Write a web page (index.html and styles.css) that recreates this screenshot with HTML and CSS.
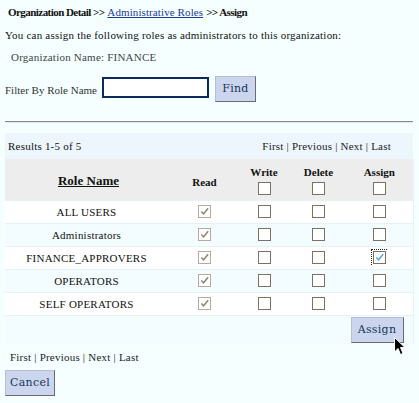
FILE: index.html
```html
<!DOCTYPE html>
<html>
<head>
<meta charset="utf-8">
<link rel="stylesheet" href="styles.css">
</head>
<body>
<div class="page">
  <div class="crumbs"><b>Organization Detail &gt;&gt;</b> <a href="#">Administrative Roles</a> <b>&gt;&gt; Assign</b></div>
  <p class="intro">You can assign the following roles as administrators to this organization:</p>
  <p class="orgname">Organization Name: FINANCE</p>
  <div class="filter">
    <span class="filter-label">Filter By Role Name</span>
    <span class="filter-input"></span>
    <span class="btn find">Find</span>
  </div>
  <div class="rule"></div>
  <div class="results">
    <div class="results-bar">
      <span>Results 1-5 of 5</span>
      <span class="pager">First | Previous | Next | Last</span>
    </div>
    <table class="grid">
      <colgroup><col class="c-name"><col class="c-read"><col class="c-write"><col class="c-del"><col class="c-assign"></colgroup>
      <thead>
        <tr>
          <th class="th-name"><u>Role Name</u></th>
          <th class="th-read">Read</th>
          <th><div class="th-label">Write</div><span class="cb"></span></th>
          <th><div class="th-label">Delete</div><span class="cb"></span></th>
          <th><div class="th-label">Assign</div><span class="cb"></span></th>
        </tr>
      </thead>
      <tbody>
        <tr class="odd"><td>ALL USERS</td><td><span class="cb ro"><svg viewBox="0 0 12 12"><path d="M2.5 6 L5 8.5 L10 2.5" /></svg></span></td><td><span class="cb"></span></td><td><span class="cb"></span></td><td><span class="cb"></span></td></tr>
        <tr class="even"><td>Administrators</td><td><span class="cb ro"><svg viewBox="0 0 12 12"><path d="M2.5 6 L5 8.5 L10 2.5" /></svg></span></td><td><span class="cb"></span></td><td><span class="cb"></span></td><td><span class="cb"></span></td></tr>
        <tr class="odd"><td>FINANCE_APPROVERS</td><td><span class="cb ro"><svg viewBox="0 0 12 12"><path d="M2.5 6 L5 8.5 L10 2.5" /></svg></span></td><td><span class="cb"></span></td><td><span class="cb"></span></td><td><span class="cb on focus"><svg viewBox="0 0 12 12"><path d="M2.5 6 L5 8.5 L10 2.5" /></svg></span></td></tr>
        <tr class="even"><td>OPERATORS</td><td><span class="cb ro"><svg viewBox="0 0 12 12"><path d="M2.5 6 L5 8.5 L10 2.5" /></svg></span></td><td><span class="cb"></span></td><td><span class="cb"></span></td><td><span class="cb"></span></td></tr>
        <tr class="odd"><td>SELF OPERATORS</td><td><span class="cb ro"><svg viewBox="0 0 12 12"><path d="M2.5 6 L5 8.5 L10 2.5" /></svg></span></td><td><span class="cb"></span></td><td><span class="cb"></span></td><td><span class="cb"></span></td></tr>
        <tr class="action"><td colspan="5"><span class="btn assign">Assign<svg class="cursor" viewBox="0 0 12 19"><path d="M0.5 0.5 L0.5 15 L4 11.5 L6.5 17.5 L9 16.5 L6.5 10.5 L11 10.5 Z" /></svg></span></td></tr>
      </tbody>
    </table>
  </div>
  <div class="pager bottom">First | Previous | Next | Last</div>
  <span class="btn cancel">Cancel</span>
</div>
</body>
</html>
```

FILE: styles.css
```css
html, body {
  margin: 0;
  padding: 0;
  background: #f5ffff;
}
body {
  font-family: "Liberation Serif", "Times New Roman", serif;
  font-size: 11px;
  color: #111;
  letter-spacing: 0.22px;
}
.page {
  padding: 5px 6px 0 5px;
}
.crumbs {
  padding-left: 3px;
  height: 14px;
  line-height: 14px;
  font-size: 11px;
}
.crumbs b {
  letter-spacing: -0.55px;
}
.crumbs a {
  color: #1a3a9a;
  font-weight: normal;
  letter-spacing: 0.1px;
}
.intro {
  margin: 9px 0 0 0;
  line-height: 14px;
}
.orgname {
  margin: 8px 0 0 6px;
  line-height: 14px;
  color: #444;
}
.filter {
  display: flex;
  align-items: center;
  margin-top: 12px;
  height: 26px;
}
.filter-label {
  color: #333;
  margin-right: 5px;
  margin-top: 1px;
  letter-spacing: 0;
}
.filter-input {
  width: 103px;
  height: 17px;
  border: 2px solid #0a2a5a;
  background: #fff;
  margin-top: -3px;
}
.btn {
  display: inline-flex;
  align-items: center;
  justify-content: center;
  box-sizing: border-box;
  background: #ccd5ee;
  border: 1px solid;
  border-color: #b8bed0 #6a6a72 #6a6a72 #b8bed0;
  font-family: "DejaVu Serif", serif;
  font-size: 11px;
  letter-spacing: 0.3px;
  color: #14375a;
  height: 26px;
  position: relative;
}
.find {
  width: 41px;
  margin-left: 6px;
  margin-top: -1px;
}
.rule {
  margin-top: 19px;
  height: 1px;
  background: #8a8a8a;
  border-bottom: 1px solid #e0e8e8;
}
.results {
  margin-top: 10px;
  width: 408px;
}
.results-bar {
  display: flex;
  justify-content: space-between;
  align-items: center;
  height: 26px;
  background: #eef6fd;
  padding: 0 22px 0 3px;
  box-sizing: border-box;
}
.pager {
  color: #222;
}
.grid {
  width: 408px;
  table-layout: fixed;
  border-collapse: collapse;
  border-right: 1px solid #e6f2fa;
}
.c-name { width: 167px; }
.c-read { width: 65px; }
.c-write { width: 54px; }
.c-del { width: 55px; }
.c-assign { width: 67px; }
thead tr {
  background: #ededed;
  height: 41px;
}
th {
  font-weight: bold;
  font-size: 11px;
  padding: 0;
  text-align: center;
  vertical-align: middle;
  letter-spacing: 0;
}
.th-name {
  font-size: 13px;
  padding-top: 4px;
}
.th-read { padding-top: 6px; }
.th-label {
  line-height: 12px;
  margin-top: 2px;
  margin-bottom: 3px;
}
tbody td {
  text-align: center;
  vertical-align: middle;
  padding: 0;
  height: 22px;
  border-top: 1px solid #e6f2fa;
}
tbody tr.odd { background: #ffffff; }
tbody tr.even { background: #f3fdff; }
tbody td:first-child { padding-right: 4px; }
.cb {
  display: inline-block;
  box-sizing: border-box;
  width: 13px;
  height: 13px;
  border: 1px solid #7b7264;
  background: #fff;
  vertical-align: middle;
  position: relative;
}
.cb svg {
  position: absolute;
  left: 0;
  top: 0;
  width: 11px;
  height: 11px;
}
.cb svg path {
  fill: none;
  stroke-width: 1.6;
}
.cb.ro {
  border-color: #b7aa9c;
}
.cb.ro svg path { stroke: #8c8478; }
.cb.on svg path { stroke: #5aa6ea; }
.cb.focus::before {
  content: "";
  position: absolute;
  left: -3px;
  top: -3px;
  width: 15px;
  height: 15px;
  border-top: 1px dotted #222;
  border-left: 1px dotted #222;
}
tr.action {
  background: #f3fdff;
}
tr.action td {
  height: 28px;
  text-align: right;
  padding-right: 9px;
}
.assign {
  width: 53px;
  vertical-align: middle;
}
.cursor {
  position: absolute;
  left: 42px;
  top: 19px;
  width: 12px;
  height: 19px;
}
.cursor path {
  fill: #000;
  stroke: #fff;
  stroke-width: 1;
}
.bottom {
  margin-top: 6px;
  padding-left: 5px;
  line-height: 14px;
}
.cancel {
  margin-top: 6px;
  width: 50px;
}
```
